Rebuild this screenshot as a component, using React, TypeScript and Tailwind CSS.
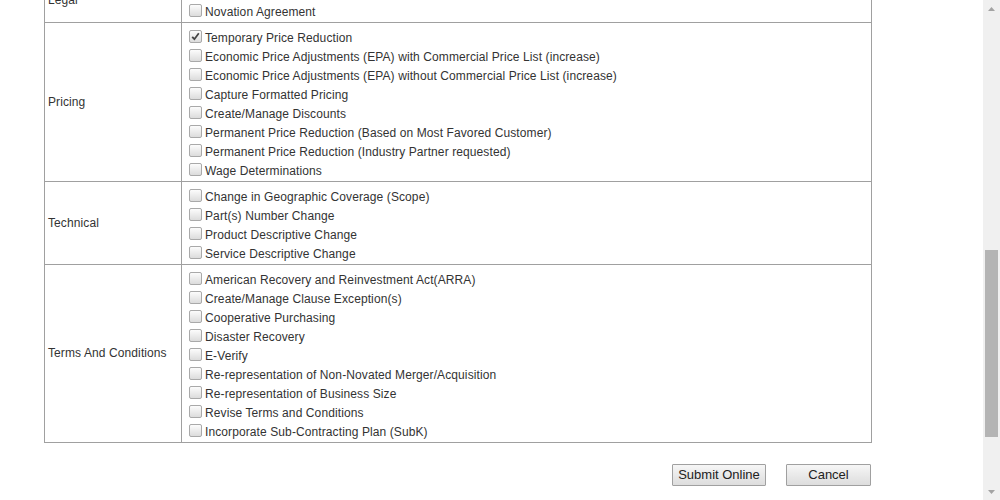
import React from "react"

type Section = {
  name: string
  items: { label: string; checked?: boolean }[]
}

const sections: Section[] = [
  {
    name: "Legal",
    items: [{ label: "Change of Name" }, { label: "Novation Agreement" }],
  },
  {
    name: "Pricing",
    items: [
      { label: "Temporary Price Reduction", checked: true },
      { label: "Economic Price Adjustments (EPA) with Commercial Price List (increase)" },
      { label: "Economic Price Adjustments (EPA) without Commercial Price List (increase)" },
      { label: "Capture Formatted Pricing" },
      { label: "Create/Manage Discounts" },
      { label: "Permanent Price Reduction (Based on Most Favored Customer)" },
      { label: "Permanent Price Reduction (Industry Partner requested)" },
      { label: "Wage Determinations" },
    ],
  },
  {
    name: "Technical",
    items: [
      { label: "Change in Geographic Coverage (Scope)" },
      { label: "Part(s) Number Change" },
      { label: "Product Descriptive Change" },
      { label: "Service Descriptive Change" },
    ],
  },
  {
    name: "Terms And Conditions",
    items: [
      { label: "American Recovery and Reinvestment Act(ARRA)" },
      { label: "Create/Manage Clause Exception(s)" },
      { label: "Cooperative Purchasing" },
      { label: "Disaster Recovery" },
      { label: "E-Verify" },
      { label: "Re-representation of Non-Novated Merger/Acquisition" },
      { label: "Re-representation of Business Size" },
      { label: "Revise Terms and Conditions" },
      { label: "Incorporate Sub-Contracting Plan (SubK)" },
    ],
  },
]

function CheckBox({ checked }: { checked?: boolean }) {
  return (
    <span className="ml-[4px] mt-[3px] flex h-[13px] w-[13px] shrink-0 items-center justify-center rounded-[2px] border border-[#a9a9a9] bg-gradient-to-b from-[#fcfcfc] to-[#dcdcdc]">
      {checked && (
        <svg width="9" height="9" viewBox="0 0 9 9">
          <path d="M1.2 4.8 L3.4 7.2 L7.8 1.2" fill="none" stroke="#444" strokeWidth="1.8" />
        </svg>
      )}
    </span>
  )
}

function Scrollbar() {
  return (
    <div className="flex h-[500px] w-[17px] shrink-0 flex-col items-center bg-[#f0f0f0]">
      <div className="flex h-[17px] w-full items-center justify-center">
        <svg width="7" height="4" viewBox="0 0 7 4">
          <path d="M0 4 L3.5 0 L7 4 Z" fill="#a3a3a3" />
        </svg>
      </div>
      <div className="h-[233px]" />
      <div className="h-[187px] w-[13px] bg-[#b4b4b4]" />
      <div className="flex-1" />
      <div className="flex h-[17px] w-full items-center justify-center">
        <svg width="7" height="4" viewBox="0 0 7 4">
          <path d="M0 0 L7 0 L3.5 4 Z" fill="#a3a3a3" />
        </svg>
      </div>
    </div>
  )
}

export default function App() {
  return (
    <div className="flex h-[500px] w-[1000px] overflow-hidden bg-white font-['Liberation_Sans',Arial,sans-serif] text-[12px] tracking-[0.1px] text-[#333]">
      <div className="flex-1 overflow-hidden">
        <div className="ml-[44px] mt-[-23px] w-[828px]">
          <table className="w-[828px] border-collapse">
            <tbody>
              {sections.map((s) => (
                <tr key={s.name}>
                  <td className="w-[137px] border border-[#a0a0a0] px-[3px] pb-[1px] align-middle">{s.name}</td>
                  <td className="border border-[#a0a0a0] px-[3px] pt-[4px] pb-[2px]">
                    {s.items.map((it) => (
                      <div key={it.label} className="flex h-[19px] items-start">
                        <CheckBox checked={it.checked} />
                        <span className="ml-[3px] pt-[2px] leading-[19px]">{it.label}</span>
                      </div>
                    ))}
                  </td>
                </tr>
              ))}
            </tbody>
          </table>
          <div className="mr-[1px] mt-[21px] flex justify-end gap-[20px]">
            <button className="h-[22px] w-[94px] rounded-[1px] border border-[#a0a0a0] bg-gradient-to-b from-[#f6f6f6] to-[#dddddd] text-[13px] tracking-normal text-[#222]">
              Submit Online
            </button>
            <button className="h-[22px] w-[85px] rounded-[1px] border border-[#a0a0a0] bg-gradient-to-b from-[#f6f6f6] to-[#dddddd] text-[13px] tracking-normal text-[#222]">
              Cancel
            </button>
          </div>
        </div>
      </div>
      <Scrollbar />
    </div>
  )
}
